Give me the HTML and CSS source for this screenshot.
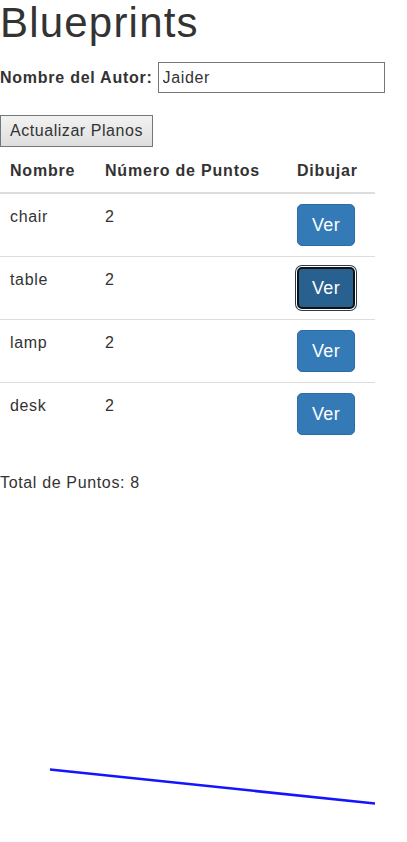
FILE: index.html
```html
<!DOCTYPE html>
<html lang="es">
<head>
<meta charset="utf-8">
<title>Blueprints</title>
<link rel="stylesheet" href="styles.css">
</head>
<body>
<h1 class="title">Blueprints</h1>
<div class="author">
  <label class="author-label" for="author">Nombre del Autor:</label>
  <input class="author-input" id="author" type="text" value="Jaider">
</div>
<button class="update-btn" type="button">Actualizar Planos</button>
<table class="bp-table">
  <thead>
    <tr>
      <th class="col-name">Nombre</th>
      <th class="col-points">Número de Puntos</th>
      <th class="col-draw">Dibujar</th>
    </tr>
  </thead>
  <tbody>
    <tr><td>chair</td><td>2</td><td><button class="ver-btn" type="button">Ver</button></td></tr>
    <tr><td>table</td><td>2</td><td><button class="ver-btn is-focused" type="button">Ver</button></td></tr>
    <tr><td>lamp</td><td>2</td><td><button class="ver-btn" type="button">Ver</button></td></tr>
    <tr><td>desk</td><td>2</td><td><button class="ver-btn" type="button">Ver</button></td></tr>
  </tbody>
</table>
<p class="total">Total de Puntos: 8</p>
<svg class="canvas" width="375" height="339" viewBox="0 0 375 339">
  <line x1="50" y1="266.5" x2="375" y2="300.5" stroke="#1414ff" stroke-width="2.6"/>
</svg>
</body>
</html>
```
FILE: styles.css
```css
html, body {
  margin: 0;
  padding: 0;
  background: #fff;
}
body {
  font-family: "Liberation Sans", Arial, sans-serif;
  font-size: 16px;
  line-height: 22px;
  color: #333;
  letter-spacing: 0.65px;
}
.title {
  margin: 0;
  font-size: 42px;
  line-height: 46px;
  font-weight: 400;
  color: #333;
  letter-spacing: 1.2px;
}
.author {
  margin-top: 16px;
  display: flex;
  align-items: center;
  gap: 5px;
  height: 31px;
}
.author-label {
  font-weight: 700;
  font-size: 16px;
  letter-spacing: 0.75px;
}
.author-input {
  box-sizing: border-box;
  width: 227px;
  height: 31px;
  margin: 0;
  padding: 0 4px;
  border: 1px solid #767676;
  font-family: "Liberation Sans", Arial, sans-serif;
  font-size: 16px;
  letter-spacing: 0.65px;
  color: #333;
  outline: none;
}
.update-btn {
  display: block;
  box-sizing: border-box;
  margin: 22px 0 0 0;
  height: 32px;
  padding: 0 9px;
  border: 1px solid #767676;
  border-radius: 0;
  background: linear-gradient(#f2f2f2, #dedede);
  font-family: "Liberation Sans", Arial, sans-serif;
  font-size: 16px;
  letter-spacing: 0.55px;
  color: #333;
}
.bp-table {
  width: 375px;
  border-collapse: collapse;
  border-spacing: 0;
}
.bp-table th {
  text-align: left;
  font-weight: 700;
  letter-spacing: 0.8px;
  padding: 13px 10px 10px 10px;
  border-bottom: 2px solid #ddd;
  vertical-align: bottom;
}
.col-name { width: 75px; }
.col-points { width: 172px; }
.bp-table td {
  padding: 10px 10px;
  vertical-align: top;
  border-top: 1px solid #ddd;
  height: 42px;
  line-height: 26px;
}
.bp-table tbody tr:first-child td {
  border-top: 0;
}
.ver-btn {
  display: block;
  box-sizing: border-box;
  width: 58px;
  height: 42px;
  margin: 0;
  padding: 0;
  border: 1px solid #2e6da4;
  border-radius: 5px;
  background: #337ab7;
  color: #fff;
  font-family: "Liberation Sans", Arial, sans-serif;
  font-size: 18px;
  line-height: 24px;
  letter-spacing: 0.4px;
}
.ver-btn.is-focused {
  background: #286090;
  border: 2px solid #111;
  box-shadow: 0 0 0 1px #fff, 0 0 0 2px #2a3a4a;
}
.total {
  margin: 27px 0 0 0;
}
.canvas {
  display: block;
  margin-top: 9px;
}
```
